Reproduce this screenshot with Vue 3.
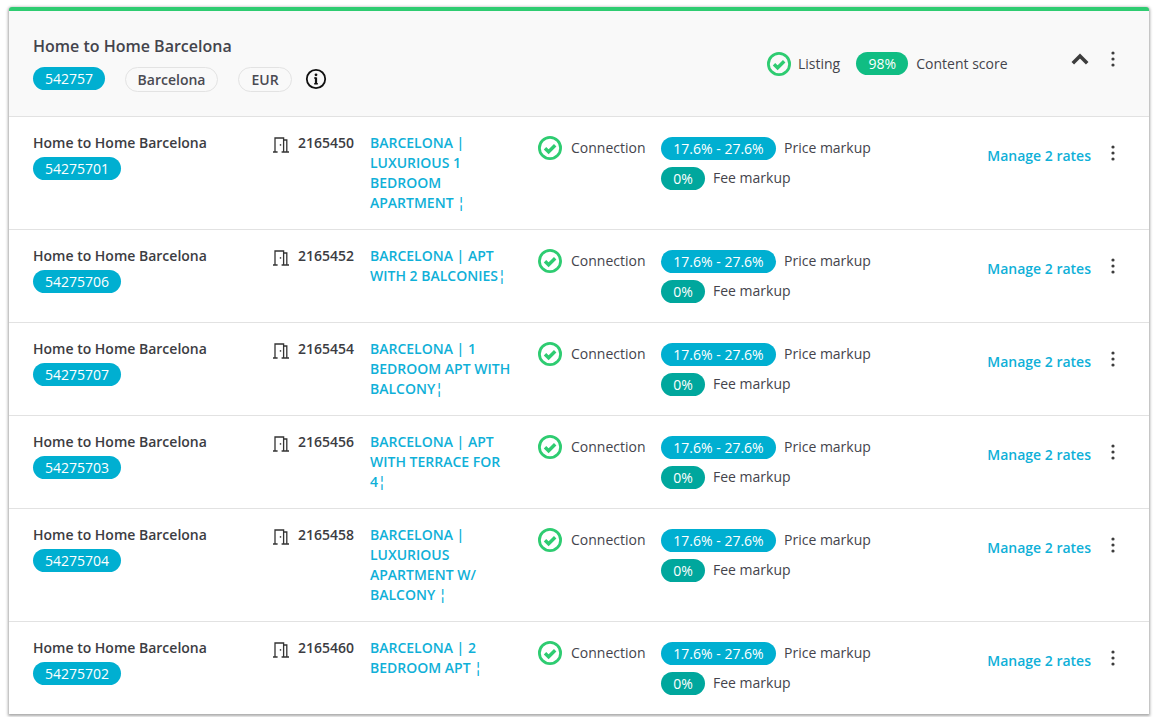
<script setup>
const rows = [
  { code: '54275701', room: '2165450', title: 'BARCELONA | LUXURIOUS 1 BEDROOM APARTMENT ¦' },
  { code: '54275706', room: '2165452', title: 'BARCELONA | APT WITH 2 BALCONIES¦' },
  { code: '54275707', room: '2165454', title: 'BARCELONA | 1 BEDROOM APT WITH BALCONY¦' },
  { code: '54275703', room: '2165456', title: 'BARCELONA | APT WITH TERRACE FOR 4¦' },
  { code: '54275704', room: '2165458', title: 'BARCELONA | LUXURIOUS APARTMENT W/ BALCONY ¦' },
  { code: '54275702', room: '2165460', title: 'BARCELONA | 2 BEDROOM APT ¦' }
]
</script>

<template>
  <div class="page">
    <section class="card">
      <header class="head">
        <div class="head-left">
          <h2 class="head-title">Home to Home Barcelona</h2>
          <div class="tags">
            <span class="pill blue id">542757</span>
            <span class="tag city">Barcelona</span>
            <span class="tag cur">EUR</span>
            <svg class="info" viewBox="0 0 22 22" width="22" height="22">
              <circle cx="11" cy="11" r="9.2" fill="none" stroke="#111" stroke-width="1.8" />
              <circle cx="11" cy="6.8" r="1.4" fill="#111" />
              <rect x="9.9" y="9.4" width="2.2" height="6.8" fill="#111" />
              <rect x="9" y="9.4" width="2" height="1.2" fill="#111" />
              <rect x="9" y="15.2" width="4" height="1.2" fill="#111" />
            </svg>
          </div>
        </div>
        <div class="head-status">
          <svg class="check" viewBox="0 0 24 24" width="24" height="24">
            <circle cx="12" cy="12" r="10.6" fill="none" stroke="#2ecc71" stroke-width="2.8" />
            <path d="M7 12.2l3.6 3.6 6.6-6.6" fill="none" stroke="#2ecc71" stroke-width="3.4" />
          </svg>
          <span class="lbl listing">Listing</span>
          <span class="pill green">98%</span>
          <span class="lbl">Content score</span>
        </div>
        <div class="head-actions">
          <svg class="chev" viewBox="0 0 18 12" width="18" height="12">
            <path d="M1.8 10.2L9 3l7.2 7.2" fill="none" stroke="#3d3d3d" stroke-width="3.6" />
          </svg>
          <svg class="dots" viewBox="0 0 4 16" width="4" height="16">
            <circle cx="2" cy="2" r="1.6" fill="#3d3d3d" />
            <circle cx="2" cy="8" r="1.6" fill="#3d3d3d" />
            <circle cx="2" cy="14" r="1.6" fill="#3d3d3d" />
          </svg>
        </div>
      </header>

      <div v-for="r in rows" :key="r.code" class="row">
        <div class="name">
          <div class="strong">Home to Home Barcelona</div>
          <span class="pill blue code">{{ r.code }}</span>
        </div>
        <div class="room">
          <svg class="door" viewBox="0 0 16 16" width="16" height="16">
            <path d="M2 15V1h8.6v14M10.6 3h3.2v12M0 15h4.6M8.6 15H16" fill="none" stroke="#333" stroke-width="1.3" />
            <rect x="6.8" y="7" width="1.4" height="1.8" fill="#555" />
          </svg>
          <span class="strong">{{ r.room }}</span>
        </div>
        <a class="title">{{ r.title }}</a>
        <div class="conn">
          <svg class="check" viewBox="0 0 24 24" width="24" height="24">
            <circle cx="12" cy="12" r="10.6" fill="none" stroke="#2ecc71" stroke-width="2.8" />
            <path d="M7 12.2l3.6 3.6 6.6-6.6" fill="none" stroke="#2ecc71" stroke-width="3.4" />
          </svg>
          <span class="lbl">Connection</span>
        </div>
        <div class="markup">
          <div class="mline">
            <span class="pill blue price">17.6% - 27.6%</span>
            <span class="lbl">Price markup</span>
          </div>
          <div class="mline">
            <span class="pill teal fee">0%</span>
            <span class="lbl">Fee markup</span>
          </div>
        </div>
        <a class="manage">Manage 2 rates</a>
        <svg class="dots row-dots" viewBox="0 0 4 16" width="4" height="16">
          <circle cx="2" cy="2" r="1.6" fill="#3d3d3d" />
          <circle cx="2" cy="8" r="1.6" fill="#3d3d3d" />
          <circle cx="2" cy="14" r="1.6" fill="#3d3d3d" />
        </svg>
      </div>
    </section>
  </div>
</template>

<style scoped>
.page {
  width: 1155px;
  height: 717px;
  padding: 7px 6px 0 9px;
  box-sizing: border-box;
  overflow: hidden;
  font-family: "Open Sans", "Liberation Sans", sans-serif;
  font-size: 14px;
  line-height: 20px;
  color: #3f3f46;
  background: #fff;
}
.card {
  width: 1140px;
  background: #fff;
  border-top: 4px solid #2ecc71;
  border-radius: 3px 3px 0 0;
  box-shadow: 0 1px 3px 1px rgba(0, 0, 0, 0.35);
}
.head {
  height: 106px;
  box-sizing: border-box;
  padding: 25px 0 0 24px;
  display: flex;
  background: #f9f9f9;
  border-bottom: 1px solid #e2e2e2;
}
.head-left {
  width: 734px;
}
.head-title {
  margin: 0;
  font-size: 16px;
  font-weight: 600;
  line-height: 20px;
  color: #44444c;
}
.tags {
  display: flex;
  align-items: flex-start;
  margin-top: 11px;
}
.pill {
  display: inline-block;
  height: 23px;
  line-height: 23px;
  border-radius: 12px;
  color: #fff;
  text-align: center;
  white-space: nowrap;
  box-sizing: border-box;
}
.blue { background: #00afd1; }
.teal { background: #00a79d; }
.green { background: #10bd83; width: 52px; margin-left: 16px; }
.id { width: 72px; }
.tag {
  height: 25px;
  line-height: 23px;
  box-sizing: border-box;
  border: 1px solid #e3e3e3;
  border-radius: 13px;
  text-align: center;
  font-weight: 600;
  color: #4a4a52;
}
.city { width: 93px; margin-left: 20px; }
.cur { width: 54px; margin-left: 20px; }
.info { margin-left: 13px; margin-top: 1px; }
.head-status {
  display: flex;
  align-items: center;
  height: 23px;
  margin-top: 16px;
}
.listing { margin-left: 7px; }
.lbl { color: #44444c; white-space: nowrap; }
.green + .lbl { margin-left: 8px; }
.head-actions {
  display: flex;
  align-items: center;
  margin-left: 63px;
  height: 16px;
  margin-top: 15px;
}
.chev { display: block; }
.head-actions .dots { margin-left: 22px; }
.dots { display: block; flex: none; }

.row {
  display: grid;
  grid-template-columns: 240px 97px 168px 123px 1fr auto 4px;
  padding: 16px 34px 16px 24px;
  min-height: 60px;
  border-bottom: 1px solid #e2e2e2;
  align-items: start;
}
.row:last-child { border-bottom: 0; }
.strong {
  font-weight: 600;
  color: #3c3c42;
}
.name .strong { line-height: 20px; margin-bottom: 4px; }
.code { width: 88px; display: block; }
.room {
  display: flex;
  align-items: flex-start;
  height: 20px;
}
.door { margin: 4px 9px 0 0; flex: none; }
.title {
  width: 146px;
  font-weight: 600;
  color: #0fb0d8;
}
.conn {
  display: flex;
  align-items: center;
  height: 24px;
  margin-top: 3px;
  gap: 9px;
}
.markup {
  padding-top: 4px;
  display: flex;
  flex-direction: column;
  gap: 8px;
}
.mline {
  display: flex;
  align-items: center;
  height: 22px;
  gap: 8px;
}
.price { width: 115px; }
.fee { width: 44px; }
.manage {
  font-weight: 600;
  color: #0fb0d8;
  margin-top: 13px;
  margin-right: 20px;
  white-space: nowrap;
}
.row-dots { margin-top: 12px; }
</style>
